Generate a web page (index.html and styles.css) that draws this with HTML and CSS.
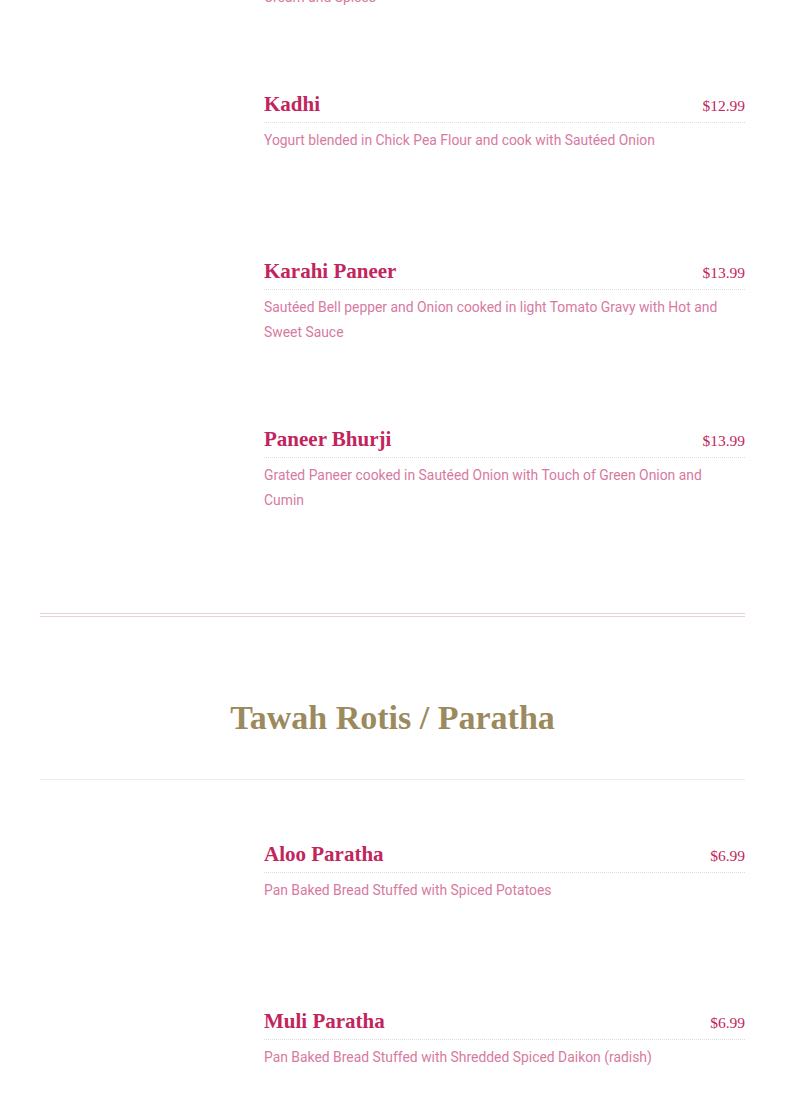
FILE: index.html
```html
<!DOCTYPE html>
<html>
<head>
<meta charset="utf-8">
<link rel="stylesheet" href="styles.css">
</head>
<body>
<div class="page">
  <section class="menu-list">
    <div class="item">
      <div class="thumb"></div>
      <div class="info">
        <div class="head"><h3 class="name">Paneer Butter Masala</h3><span class="price">$13.99</span></div>
        <p class="desc">Paneer cooked in Creamy Tomato Gravy with Butter, Cashew Paste,<br>Cream and Spices</p>
      </div>
    </div>
    <div class="item">
      <div class="thumb"></div>
      <div class="info">
        <div class="head"><h3 class="name">Kadhi</h3><span class="price">$12.99</span></div>
        <p class="desc">Yogurt blended in Chick Pea Flour and cook with Sautéed Onion</p>
      </div>
    </div>
    <div class="item">
      <div class="thumb"></div>
      <div class="info">
        <div class="head"><h3 class="name">Karahi Paneer</h3><span class="price">$13.99</span></div>
        <p class="desc">Sautéed Bell pepper and Onion cooked in light Tomato Gravy with Hot and Sweet Sauce</p>
      </div>
    </div>
    <div class="item">
      <div class="thumb"></div>
      <div class="info">
        <div class="head"><h3 class="name">Paneer Bhurji</h3><span class="price">$13.99</span></div>
        <p class="desc">Grated Paneer cooked in Sautéed Onion with Touch of Green Onion and Cumin</p>
      </div>
    </div>
  </section>

  <div class="divider"></div>

  <h2 class="section-title">Tawah Rotis / Paratha</h2>
  <div class="rule"></div>

  <section class="menu-list second">
    <div class="item">
      <div class="thumb"></div>
      <div class="info">
        <div class="head"><h3 class="name">Aloo Paratha</h3><span class="price">$6.99</span></div>
        <p class="desc">Pan Baked Bread Stuffed with Spiced Potatoes</p>
      </div>
    </div>
    <div class="item">
      <div class="thumb"></div>
      <div class="info">
        <div class="head"><h3 class="name">Muli Paratha</h3><span class="price">$6.99</span></div>
        <p class="desc">Pan Baked Bread Stuffed with Shredded Spiced Daikon (radish)</p>
      </div>
    </div>
  </section>
</div>
</body>
</html>
```
FILE: styles.css
```css
html, body {
  margin: 0;
  padding: 0;
  background: #ffffff;
}

.page {
  margin: -79px 40px 0 40px;
}

.menu-list {
  display: flex;
  flex-direction: column;
}

.item {
  display: grid;
  grid-template-columns: 184px 1fr;
  column-gap: 40px;
  height: 167.7px;
}

.thumb {
  background: #ffffff;
}

.head {
  display: flex;
  justify-content: space-between;
  align-items: baseline;
  padding-bottom: 3px;
  border-bottom: 1px dotted #dcdcdc;
}

.name {
  margin: 0;
  font-family: "Liberation Serif", "DejaVu Serif", serif;
  font-weight: 700;
  font-size: 21px;
  line-height: 30px;
  color: #c2255c;
}

.price {
  font-family: "Liberation Serif", serif;
  font-size: 15.5px;
  color: #c2255c;
}

.desc {
  margin: 5px 0 0 0;
  font-family: Roboto, "Liberation Sans", sans-serif;
  font-size: 13.9px;
  line-height: 25px;
  color: #d77aa1;
}

.divider {
  margin-top: 21px;
  border-bottom: 4px double #e6d3da;
}

.section-title {
  margin: 79px 0 0 0;
  text-align: center;
  font-family: "Liberation Serif", "DejaVu Serif", serif;
  font-weight: 700;
  font-size: 34px;
  line-height: 44px;
  color: #9c8a5f;
}

.rule {
  margin-top: 39px;
  border-bottom: 1px solid #ececec;
}

.second {
  margin-top: 59px;
}
```
